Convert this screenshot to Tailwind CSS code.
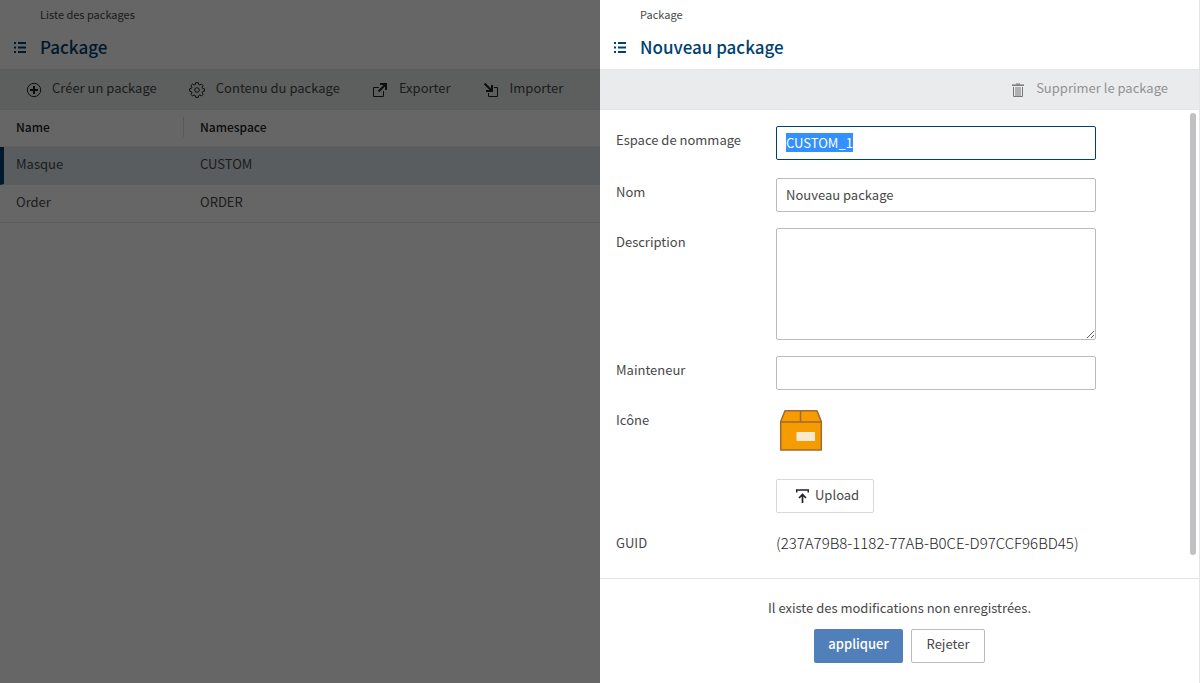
<!DOCTYPE html>
<html lang="fr">
<head>
<meta charset="utf-8">
<meta name="viewport" content="width=device-width, initial-scale=1">
<title>Nouveau package</title>
<script src="https://cdn.jsdelivr.net/npm/@tailwindcss/browser@4"></script>
</head>
<body class="grid min-h-screen grid-cols-2 bg-white font-['Noto_Sans_CJK_SC','Open_Sans',sans-serif] text-[13px] leading-5 text-[#484848]">

<!-- Package list, dimmed behind the editing panel -->
<main class="relative flex flex-col overflow-hidden">
  <header class="flex h-[69px] flex-col gap-[11px] pt-1">
    <a href="#" class="pl-10 text-[11px] leading-5">Liste des packages</a>
    <div class="flex items-center text-[#00416f]">
      <button type="button" aria-label="Menu" class="flex w-10 justify-center">
        <svg width="12" height="11" viewBox="0 0 12 11" fill="currentColor"><path d="M0 0h2v2H0zM4 0h8v2H4zM0 4.5h2v2H0zM4 4.5h8v2H4zM0 9h2v2H0zM4 9h8v2H4z"/></svg>
      </button>
      <h1 class="text-[17px] leading-6 font-medium">Package</h1>
    </div>
  </header>
  <nav class="flex h-[41px] items-center gap-8 border-y border-[#e4e6e5] bg-[#e8edeb] pb-1 pl-[26px] whitespace-nowrap">
    <button type="button" class="flex items-center gap-[10px]">
      <svg class="mt-1" width="16" height="16" viewBox="0 0 16 16" fill="none" stroke="#222"><circle cx="8" cy="8" r="6.7"/><path stroke-width="2" d="M8 4v8M4 8h8"/></svg>
      Créer un package
    </button>
    <button type="button" class="flex items-center gap-[11px]">
      <svg class="mt-1" width="16" height="16" viewBox="0 0 16 16" fill="none" stroke="#222"><path stroke-linejoin="round" d="M6.7.7h2.6l.4 1.8 1.2.5 1.6-1 1.6 1.6-1 1.6.5 1.2 1.8.4v2.4l-1.8.4-.5 1.2 1 1.6-1.6 1.6-1.6-1-1.2.5-.4 1.8H6.7l-.4-1.8-1.2-.5-1.6 1-1.6-1.6 1-1.6-.5-1.2L.6 9.200V6.800l1.800-.4.5-1.200-1-1.600L3.500 2l1.600 1 1.200-.5z"/><circle cx="8" cy="8" r="2.300"/></svg>
      Contenu du package
    </button>
    <button type="button" class="flex items-center gap-[11px]">
      <svg class="mt-1" width="16" height="16" viewBox="0 0 16 16" fill="none" stroke="#222"><path d="M7 5.500H1.500v9h10V9"/><path stroke-width="2" d="M8 2h6v6M14 2L6.500 9.500"/></svg>
      Exporter
    </button>
    <button type="button" class="flex items-center gap-[11px]">
      <svg class="mt-1" width="16" height="16" viewBox="0 0 16 16" fill="none" stroke="#222"><path d="M5.500 11v3.500h9v-9H11"/><path stroke-width="2" d="M9 3v6H3M1.500 1.500L9 9"/></svg>
      Importer
    </button>
  </nav>
  <table class="w-full table-fixed border-separate border-spacing-0 text-left">
    <colgroup><col class="w-[184px]"><col></colgroup>
    <thead>
      <tr class="h-[37px] text-[12px] text-[#222]">
        <th scope="col" class="border-b border-[#eee] p-0 pb-[3px] font-medium"><div class="border-r border-[#ddd] pl-4">Name</div></th>
        <th scope="col" class="border-b border-[#eee] p-0 pb-[3px] pl-4 font-medium">Namespace</th>
      </tr>
    </thead>
    <tbody>
      <tr class="h-[38px] bg-[#dee8ee]">
        <td class="border-b border-l-4 border-b-[#e4e8ea] border-l-[#00416f] p-0 pb-1 pl-3">Masque</td>
        <td class="border-b border-[#e4e8ea] p-0 pb-1 pl-4">CUSTOM</td>
      </tr>
      <tr class="h-[38px]">
        <td class="border-b border-[#e4e4e4] p-0 pb-1 pl-4">Order</td>
        <td class="border-b border-[#e4e4e4] p-0 pb-1 pl-4">ORDER</td>
      </tr>
    </tbody>
  </table>
  <div class="absolute inset-0 bg-black/60"></div>
</main>

<!-- Editing panel -->
<section class="flex flex-col border-r border-[#e4e4e4] bg-white">
  <header class="flex h-[69px] flex-col gap-[11px] pt-1">
    <a href="#" class="pl-10 text-[11px] leading-5">Package</a>
    <div class="flex items-center text-[#00416f]">
      <button type="button" aria-label="Menu" class="flex w-10 justify-center">
        <svg width="12" height="11" viewBox="0 0 12 11" fill="currentColor"><path d="M0 0h2v2H0zM4 0h8v2H4zM0 4.5h2v2H0zM4 4.5h8v2H4zM0 9h2v2H0zM4 9h8v2H4z"/></svg>
      </button>
      <h2 class="text-[17px] leading-6 font-medium">Nouveau package</h2>
    </div>
  </header>
  <div class="flex h-[41px] items-center justify-end border-y border-[#e6e6e6] bg-[#eaebed] pr-[31px] pb-1">
    <button type="button" disabled class="flex items-center gap-3 text-[#929292]">
      <svg class="mt-1" width="12" height="14" viewBox="0 0 12 14" fill="none" stroke="#777"><path stroke-width="1.500" d="M0 2.200h12"/><path d="M4 1h4M1.500 4v9.500h9V4M4 4v9M6 4v9M8 4v9"/></svg>
      Supprimer le package
    </button>
  </div>
  <form id="package" class="relative flex grow flex-col gap-4 py-4 pl-4">
    <div class="flex h-9 items-start">
      <label for="ns" class="w-40 leading-7">Espace de nommage</label>
      <input id="ns" value="CUSTOM_1" autofocus class="h-[34px] w-80 rounded-xs border border-[#00416f] px-[9px] pb-[2px] outline-none selection:bg-[#3390ff] selection:text-white">
    </div>
    <div class="flex items-start">
      <label for="name" class="w-40 leading-7">Nom</label>
      <input id="name" value="Nouveau package" class="h-[34px] w-80 rounded-xs border border-[#bbb] px-[9px] pb-[2px]">
    </div>
    <div class="flex items-start">
      <label for="desc" class="w-40 leading-7">Description</label>
      <textarea id="desc" class="h-28 w-80 rounded-xs border border-[#bbb] px-[9px] py-1"></textarea>
    </div>
    <div class="flex items-start">
      <label for="maint" class="w-40 leading-7">Mainteneur</label>
      <input id="maint" class="h-[34px] w-80 rounded-xs border border-[#bbb] px-[9px] pb-[2px]">
    </div>
    <div class="flex items-start">
      <span class="w-40 leading-7">Icône</span>
      <div class="flex flex-col items-start gap-6">
        <svg width="50" height="49" viewBox="0 0 50 49"><g fill="#f59c00" stroke="#a5672f" stroke-width="1.500" stroke-linejoin="round"><path d="M9 4.700h32L45.300 15.500V44H4.700V15.500z"/><path fill="none" d="M4.700 16h40.600M24.500 5v11"/></g><path fill="#f9e8d0" d="M20.500 26h18.500v9H20.500z"/></svg>
        <button type="button" class="flex h-[34px] items-center gap-[6px] rounded-xs border border-[#d8d8d8] pr-[14px] pb-[2px] pl-[19px]">
          <svg class="mt-[2px]" width="13" height="14" viewBox="0 0 13 14" fill="none" stroke="#222"><path stroke-width="1.500" d="M.7 3.500V1h11.600v2.500"/><path stroke-width="1.700" d="M6.500 14V5.500M3 9l3.500-3.500L10 9"/></svg>
          Upload
        </button>
      </div>
    </div>
    <div class="flex items-start leading-7">
      <span class="w-40">GUID</span>
      <span class="text-[15px] font-light text-[#222]">(237A79B8-1182-77AB-B0CE-D97CCF96BD45)</span>
    </div>
    <div class="absolute top-[3px] right-[3px] bottom-[23px] w-[6px] rounded-full bg-[#c1c1c3]"></div>
  </form>
  <footer class="flex h-[105px] flex-col items-center gap-[11px] border-t border-[#e4e4e4] pt-[19px]">
    <p>Il existe des modifications non enregistrées.</p>
    <div class="flex gap-2">
      <button type="submit" form="package" class="h-[34px] min-w-[89px] rounded-xs bg-[#517fb9] px-[14px] pb-1 font-medium text-white">appliquer</button>
      <button type="button" class="h-[34px] min-w-[74px] rounded-xs border border-[#bbb] px-[14px] pb-1">Rejeter</button>
    </div>
  </footer>
</section>
<script>
  const ns = document.getElementById('ns');
  ns.focus();
  ns.select();
</script>
</body>
</html>
